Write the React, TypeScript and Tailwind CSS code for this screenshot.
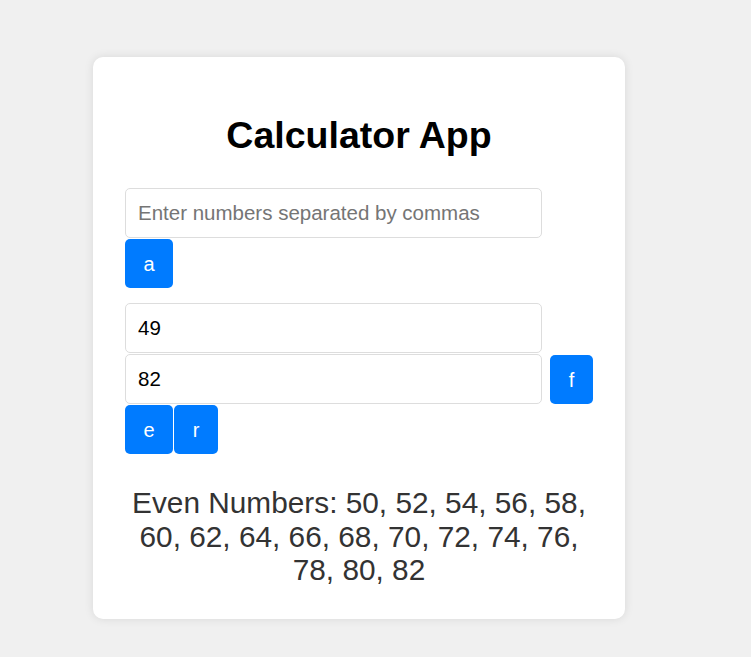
import React from "react";

export default function App() {
  const btn =
    "h-[49px] rounded-[5px] bg-[#007bff] text-white text-[20px] leading-none flex items-center justify-center";
  const inp =
    "block w-[417px] h-[50px] rounded-[5px] border border-[#dddddd] bg-white pl-[12px] text-[20.5px] text-black placeholder:text-[#757575] outline-none";
  return (
    <div
      className="min-h-[657px] bg-[#f0f0f0] pl-[93px] pt-[57px]"
      style={{ fontFamily: '"Liberation Sans", Arial, sans-serif' }}
    >
      <div className="w-[532px] rounded-[10px] bg-white p-8 shadow-[0_0_10px_rgba(0,0,0,0.1)]">
        <h1 className="mt-[25px] text-center text-[37.5px] font-bold leading-[42px] text-black">
          Calculator App
        </h1>
        <div className="mt-[32px] flex flex-col">
          <input className={inp} placeholder="Enter numbers separated by commas" />
          <button className={`${btn} mt-[1px] w-[48px]`}>a</button>
        </div>
        <div className="mt-[15px] flex flex-col">
          <input className={inp} defaultValue="49" />
          <div className="mt-[1px] flex items-end gap-[8px]">
            <input className={inp} defaultValue="82" />
            <button className={`${btn} w-[43px]`}>f</button>
          </div>
          <div className="mt-[1px] flex">
            <button className={`${btn} w-[48px]`}>e</button>
            <button className={`${btn} ml-[1px] w-[44px]`}>r</button>
          </div>
        </div>
        <p className="mt-[32px] text-center text-[29.8px] leading-[33.5px] text-[#333333]">
          Even Numbers: 50, 52, 54, 56, 58, 60, 62, 64, 66, 68, 70, 72, 74, 76, 78, 80, 82
        </p>
      </div>
    </div>
  );
}
